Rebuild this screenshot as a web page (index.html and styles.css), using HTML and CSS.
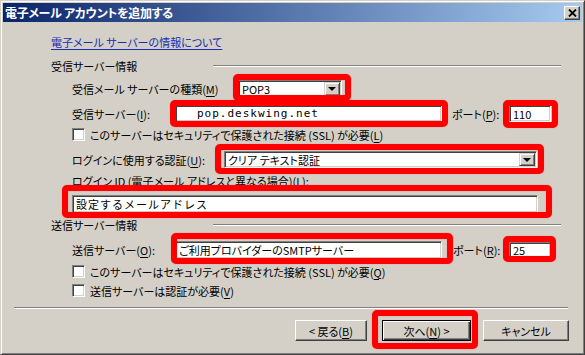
FILE: index.html
```html
<!DOCTYPE html>
<html lang="ja">
<head>
    <meta charset="UTF-8">
    <title>電子メール アカウントを追加する</title>
    <link rel="stylesheet" href="styles.css">
</head>
<body>
    <div class="dialog">
        <div class="titlebar">
            <span class="title">電子メール アカウントを追加する</span>
            <span class="close-btn">
                <svg width="9" height="8" viewBox="0 0 9 8"><path d="M1 0.5l7 7M8 0.5l-7 7" stroke="#000" stroke-width="1.8"/></svg>
            </span>
        </div>

        <div class="content">
            <a class="info-link" href="#">電子メール サーバーの情報について</a>

            <div class="group-head">
                <span class="group-title">受信サーバー情報</span>
                <span class="etched"></span>
            </div>

            <div class="row row-type">
                <span class="lbl lbl-type">受信メール サーバーの種類(<u>M</u>)</span>
                <div class="field combo combo-type"><span class="value">POP3</span><span class="drop"></span></div>
            </div>

            <div class="row row-host">
                <span class="lbl lbl-host">受信サーバー(<u>I</u>):</span>
                <div class="field host"><span class="value spaced">pop.deskwing.net</span></div>
                <span class="lbl lbl-port">ポート(<u>P</u>):</span>
                <div class="field port"><span class="value">110</span></div>
            </div>

            <div class="row check-row check-first">
                <span class="checkbox"></span>
                <span>このサーバーはセキュリティで保護された接続 (SSL) が必要(<u>L</u>)</span>
            </div>

            <div class="row row-auth">
                <span class="lbl lbl-auth">ログインに使用する認証(<u>U</u>):</span>
                <div class="field combo combo-auth"><span class="value">クリア テキスト認証</span><span class="drop"></span></div>
            </div>

            <div class="row login-label">
                <span>ログイン ID (電子メール アドレスと異なる場合)(<u>L</u>):</span>
            </div>
            <div class="row row-login">
                <div class="field login"><span class="value mono-ja">設定するメールアドレス</span></div>
            </div>

            <div class="group-head group-send">
                <span class="group-title">送信サーバー情報</span>
                <span class="etched"></span>
            </div>

            <div class="row row-smtp">
                <span class="lbl lbl-smtp">送信サーバー(<u>O</u>):</span>
                <div class="field smtp"><span class="value">ご利用プロバイダーのSMTPサーバー</span></div>
                <span class="lbl lbl-port2">ポート(<u>R</u>):</span>
                <div class="field port"><span class="value">25</span></div>
            </div>

            <div class="row check-row check-second">
                <span class="checkbox"></span>
                <span>このサーバーはセキュリティで保護された接続 (SSL) が必要(<u>Q</u>)</span>
            </div>
            <div class="row check-row check-third">
                <span class="checkbox"></span>
                <span>送信サーバーは認証が必要(<u>V</u>)</span>
            </div>
        </div>

        <div class="divider"></div>

        <div class="buttons">
            <button class="btn btn-back">&lt; 戻る(<u>B</u>)</button>
            <button class="btn btn-next">次へ(<u>N</u>) &gt;</button>
            <button class="btn btn-cancel">キャンセル</button>
        </div>
    </div>

    <!-- red annotation frames drawn over the dialog -->
    <div class="marks">
        <span class="mark m-type"></span>
        <span class="mark m-host"></span>
        <span class="mark m-port1"></span>
        <span class="mark m-auth"></span>
        <span class="mark m-login"></span>
        <span class="mark m-smtp"></span>
        <span class="mark m-port2"></span>
        <span class="mark m-next"></span>
    </div>
</body>
</html>
```

FILE: styles.css
```css
* {
    box-sizing: border-box;
}
body {
    position: relative;
    margin: 0;
    width: 585px;
    height: 355px;
    overflow: hidden;
    font-family: "Noto Sans CJK JP", "Noto Sans", sans-serif;
    font-size: 11px;
    font-feature-settings: "palt";
    color: #000;
}
u {
    text-decoration-thickness: 1px;
    text-underline-offset: 2px;
}
.dialog {
    width: 585px;
    height: 355px;
    padding: 2px;
    background-color: #d4d0c8;
    border: 1px solid;
    border-color: #d4d0c8 #404040 #404040 #d4d0c8;
    box-shadow: inset 1px 1px #fff, inset -1px -1px #808080;
}
.titlebar {
    display: flex;
    align-items: center;
    justify-content: space-between;
    height: 19px;
    padding: 0 2px 0 2px;
    background: linear-gradient(to right, #0a246a, #a6caf0);
}
.title {
    color: #fff;
    font-weight: bold;
    font-size: 12px;
    letter-spacing: -0.3px;
    line-height: 19px;
}
.close-btn {
    display: flex;
    align-items: center;
    justify-content: center;
    width: 16px;
    height: 14px;
    background-color: #d4d0c8;
    border: 1px solid;
    border-color: #fff #404040 #404040 #fff;
    box-shadow: inset -1px -1px #808080;
}
.content {
    padding: 0 21px 0 48px;
}
.info-link {
    display: block;
    width: fit-content;
    margin-top: 12px;
    line-height: 16px;
    color: #1a2fb0;
    text-decoration: underline;
    text-decoration-thickness: 1px;
    text-underline-offset: 2px;
}
.group-head {
    display: flex;
    align-items: center;
    height: 16px;
    margin-top: 8px;
}
.group-title {
    width: 162px;
    flex: none;
}
.etched {
    flex: 1;
    height: 2px;
    border-top: 1px solid #808080;
    border-bottom: 1px solid #fff;
}
.group-send {
    margin-top: 4px;
}
.row {
    display: flex;
    align-items: center;
    margin-left: 21px;
}
.lbl {
    flex: none;
    white-space: nowrap;
}
.field {
    position: relative;
    display: flex;
    align-items: center;
    flex: none;
    padding: 0 1px;
    background-color: #fff;
    border: 1px solid;
    border-color: #808080 #fff #fff #808080;
    box-shadow: inset 1px 1px #404040, inset -1px -1px #d4d0c8;
}
.value {
    padding-left: 2px;
    white-space: nowrap;
    line-height: 14px;
}
.spaced {
    padding-left: 20px;
    font-family: "DejaVu Sans Mono", monospace;
    font-size: 11px;
    letter-spacing: 1px;
}
.mono-ja {
    font-size: 11px;
    letter-spacing: 1px;
    font-feature-settings: normal;
}
.combo {
    justify-content: space-between;
}
.drop {
    position: relative;
    flex: none;
    width: 16px;
    height: 14px;
    background-color: #d4d0c8;
    border: 1px solid;
    border-color: #d4d0c8 #404040 #404040 #d4d0c8;
    box-shadow: inset 1px 1px #fff, inset -1px -1px #808080;
}
.drop::after {
    content: "";
    position: absolute;
    left: 3px;
    top: 4px;
    border-left: 4px solid transparent;
    border-right: 4px solid transparent;
    border-top: 4px solid #000;
}

/* incoming server */
.row-type {
    height: 18px;
    margin-top: 6px;
}
.lbl-type {
    width: 166px;
}
.combo-type {
    width: 104px;
    height: 18px;
}
.row-host {
    height: 17px;
    margin-top: 7px;
}
.lbl-host {
    width: 103px;
}
.host {
    width: 267px;
    height: 17px;
}
.lbl-port {
    width: 57px;
    margin-left: 10px;
}
.port {
    width: 42px;
    height: 17px;
}
.check-row {
    height: 13px;
    gap: 5px;
}
.checkbox {
    flex: none;
    width: 13px;
    height: 13px;
    background-color: #fff;
    border: 1px solid;
    border-color: #808080 #fff #fff #808080;
    box-shadow: inset 1px 1px #404040, inset -1px -1px #d4d0c8;
}
.check-first {
    margin-top: 6px;
}
.row-auth {
    height: 17px;
    margin-top: 10px;
}
.lbl-auth {
    width: 152px;
}
.combo-auth {
    width: 313px;
    height: 17px;
}
.combo-auth .drop {
    height: 13px;
}
.login-label {
    height: 16px;
    margin-top: 5px;
}
.row-login {
    height: 18px;
    margin-top: 6px;
}
.login {
    width: 466px;
    height: 18px;
}

/* outgoing server */
.row-smtp {
    height: 18px;
    margin-top: 8px;
}
.lbl-smtp {
    width: 103px;
}
.smtp {
    width: 267px;
    height: 18px;
}
.lbl-port2 {
    width: 56px;
    margin-left: 11px;
}
.check-second {
    margin-top: 6px;
}
.check-third {
    margin-top: 6px;
}

.divider {
    width: 554px;
    height: 2px;
    margin: 10px 0 0 11px;
    border-top: 1px solid #808080;
    border-bottom: 1px solid #fff;
}
.buttons {
    display: flex;
    justify-content: flex-end;
    margin-top: 11px;
    padding-right: 13px;
}
.btn {
    height: 21px;
    padding: 0;
    font-family: inherit;
    font-size: 11px;
    font-feature-settings: "palt";
    color: #000;
    background-color: #d4d0c8;
    border: 1px solid;
    border-color: #fff #404040 #404040 #fff;
    box-shadow: inset -1px -1px #808080;
}
.btn-back {
    width: 72px;
}
.btn-next {
    width: 89px;
    margin-left: 15px;
    border-color: #000;
    box-shadow: inset 1px 1px #fff, inset -1px -1px #404040, inset -2px -2px #808080;
}
.btn-cancel {
    width: 86px;
    margin-left: 12px;
}

.marks {
    position: absolute;
    inset: 0;
    pointer-events: none;
}
.mark {
    position: absolute;
    border: 6px solid #ff0000;
    border-radius: 5px;
    box-shadow: 0 0 1px rgba(255, 0, 0, 0.6), inset 0 0 1px rgba(255, 0, 0, 0.6);
}
.m-type {
    left: 233px;
    top: 74px;
    width: 118px;
    height: 27px;
}
.m-host {
    left: 170px;
    top: 100px;
    width: 278px;
    height: 27px;
}
.m-port1 {
    left: 503px;
    top: 100px;
    width: 55px;
    height: 28px;
}
.m-auth {
    left: 215px;
    top: 144px;
    width: 329px;
    height: 30px;
}
.m-login {
    left: 62px;
    top: 185px;
    width: 490px;
    height: 33px;
}
.m-smtp {
    left: 171px;
    top: 233px;
    width: 282px;
    height: 31px;
}
.m-port2 {
    left: 503px;
    top: 236px;
    width: 53px;
    height: 26px;
}
.m-next {
    left: 372px;
    top: 310px;
    width: 106px;
    height: 39px;
}
```
